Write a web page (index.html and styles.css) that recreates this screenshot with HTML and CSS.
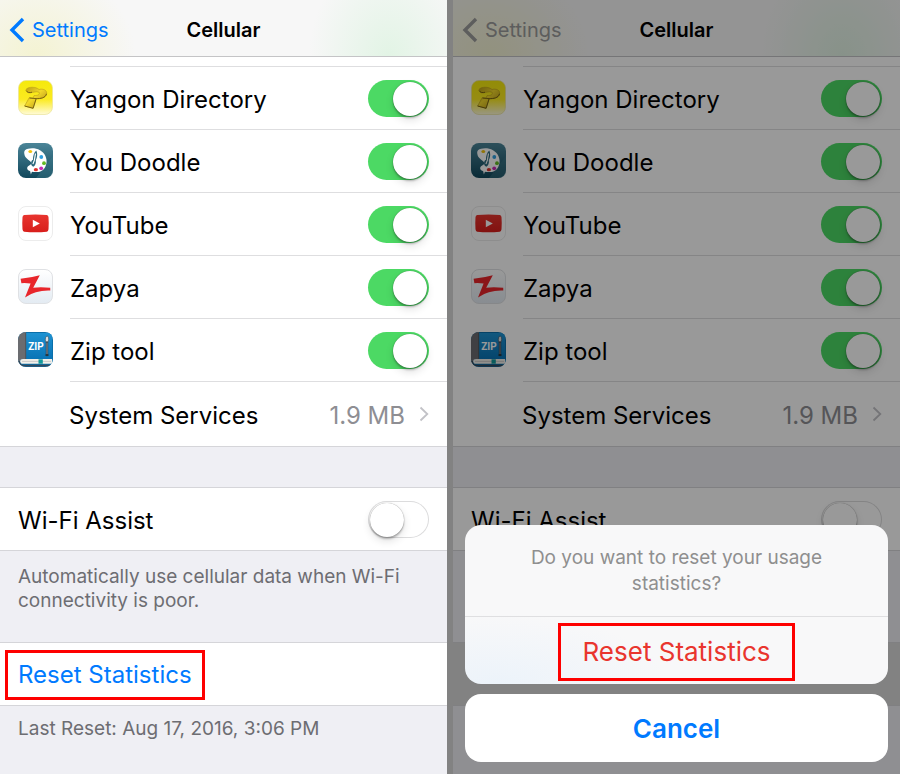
FILE: index.html
```html
<!DOCTYPE html>
<html lang="en">
<head>
<meta charset="utf-8">
<meta name="viewport" content="width=device-width, initial-scale=1">
<title>Cellular</title>
<link rel="stylesheet" href="styles.css">
</head>
<body>
<svg class="defs" width="0" height="0" aria-hidden="true">
  <defs>
    <linearGradient id="g-yellow" x1="0" y1="0" x2="0" y2="1"><stop offset="0" stop-color="#f5e90c"/><stop offset=".55" stop-color="#fbea20"/><stop offset="1" stop-color="#fffbd8"/></linearGradient>
    <linearGradient id="g-gold" x1="0" y1="0" x2="1" y2="1"><stop offset="0" stop-color="#b89a16"/><stop offset=".45" stop-color="#f2d82a"/><stop offset="1" stop-color="#a58312"/></linearGradient>
    <linearGradient id="g-teal" x1="0" y1="0" x2="0" y2="1"><stop offset="0" stop-color="#4b8598"/><stop offset="1" stop-color="#11485c"/></linearGradient>
    <linearGradient id="g-red" x1="0" y1="0" x2="0" y2="1"><stop offset="0" stop-color="#e8352f"/><stop offset="1" stop-color="#d81e1b"/></linearGradient>
    <linearGradient id="g-pale" x1="0" y1="0" x2="0" y2="1"><stop offset="0" stop-color="#ffffff"/><stop offset="1" stop-color="#e3ebf2"/></linearGradient>
    <linearGradient id="g-blue" x1="0" y1="0" x2="0" y2="1"><stop offset="0" stop-color="#1e92d2"/><stop offset="1" stop-color="#0873b5"/></linearGradient>
    <clipPath id="c-tile"><rect width="35" height="35" rx="8"/></clipPath>
  </defs>
  <symbol id="i-yangon" viewBox="0 0 35 35">
    <rect x=".5" y=".5" width="34" height="34" rx="7.5" fill="url(#g-yellow)" stroke="#e9e39a" stroke-width=".7"/>
    <path d="M8 9.5C10 6.5 18 6.5 21 9.5C25 8.4 28.6 10 28.7 13C28.6 17.8 23 18.8 18.2 18.6L15.1 28.3L6.6 26L11.2 17.7L15 18.2L16.2 15.5C20 15.7 22 14.6 21.2 12.3C18.5 10.6 14 13.2 10 12.8Z" fill="url(#g-gold)" stroke="#b89c1a" stroke-width=".6"/>
    <path d="M28.5 13.8C27.5 18 22.5 18.8 18.2 18.6L15.1 28.3L6.6 26M11.5 18L18 18.6M8 10.5C9 12.7 12 13 14 12.2" fill="none" stroke="#6e580e" stroke-width=".9"/>
  </symbol>
  <symbol id="i-doodle" viewBox="0 0 35 35">
    <rect width="35" height="35" rx="8" fill="url(#g-teal)"/>
    <path d="M35 13L18 35H27Q35 35 35 27Z" fill="#3f7788" opacity=".45"/>
    <path d="M7 7.2C10 4.8 17 4.4 22 7.2C27 10 29.4 15.5 28.4 20.5C27.4 26 23.5 29.4 18.5 29C12.5 29.2 8.8 27.5 9.2 24.8C9.6 22.5 13.8 22.5 13.2 19.6C12.8 17.8 7.8 16 6.7 12.5C6 10 6 8.2 7 7.2Z" fill="#fff"/>
    <path d="M18.2 7.6C20 11 19 15 17.8 17.2C18.3 20 17.2 23 15.3 23.7C13.6 23.4 12.6 21 13.2 19C13.5 17.8 14.2 17.2 15 16.8C14.9 13 16 9.5 18.2 7.6Z" fill="#2d697c"/>
    <path d="M17.5 10.5L16.4 17.2L14.9 21" fill="none" stroke="#fff" stroke-width="1.2"/>
    <path d="M12.2 28L12.9 31.5L14.2 28Z" fill="#fff"/>
    <ellipse cx="12.3" cy="8.4" rx="1.9" ry="1.5" fill="#f2c30e"/>
    <circle cx="23.3" cy="14" r="1.9" fill="#2e9fe0"/>
    <circle cx="26" cy="20.2" r="1.9" fill="#63bb24"/>
    <circle cx="23.2" cy="25.3" r="1.9" fill="#c72bb6"/>
    <ellipse cx="17.9" cy="26.7" rx="2.1" ry="1.6" fill="#e0312a"/>
  </symbol>
  <symbol id="i-youtube" viewBox="0 0 35 35">
    <rect x=".5" y=".5" width="34" height="34" rx="7.5" fill="#fff" stroke="#ececec"/>
    <path d="M6.2 9Q17.5 7.8 28.8 9Q30.4 9.3 30.5 11.2Q31 17.5 30.5 23.3Q30.3 25.4 28.8 25.7Q17.5 27 6.2 25.7Q4.7 25.4 4.5 23.3Q4 17.5 4.5 11.2Q4.6 9.3 6.2 9Z" fill="url(#g-red)"/>
    <path d="M14.8 13.8L21.8 17.5L14.8 21.2Z" fill="#fff"/>
  </symbol>
  <symbol id="i-zapya" viewBox="0 0 35 35">
    <rect x=".5" y=".5" width="34" height="34" rx="7.5" fill="url(#g-pale)" stroke="#dfe1e4"/>
    <path d="M2.6 9.8Q12 9 21.8 6.3L15.2 18.7Q23 18 32.2 18.8L32.3 21.6Q18 21 7 28.4L12.6 14.6Q7 13.6 3.4 14.2Z" fill="#e8262b"/>
  </symbol>
  <symbol id="i-zip" viewBox="0 0 35 35">
    <g clip-path="url(#c-tile)">
      <rect width="35" height="35" fill="#0a6faa"/>
      <rect x="7.5" y="1" width="26.5" height="27" fill="url(#g-blue)"/>
      <path d="M0 0H8V27H4Q1.2 28 1.2 35H0Z" fill="#6b6c70"/>
      <path d="M7.7 1V27" stroke="#4e565c" stroke-width="1"/>
      <path d="M5 27H34V31.8H5Q2.2 31.8 2.2 29.4Q2.2 27 5 27Z" fill="#f1efe9"/>
      <path d="M4 29.4H33" stroke="#bbb" stroke-width=".7"/>
      <path d="M1 29Q1 33.6 5.5 33.6H34" fill="none" stroke="#34495b" stroke-width="1.8"/>
      <rect x="20.5" y="27.3" width="4.3" height="4.4" fill="#129a9b"/>
      <path d="M29 10V23" stroke="#33404b" stroke-width="2.4" stroke-linecap="round"/>
      <path d="M29 10.5V22" stroke="#9faab3" stroke-width=".8"/>
      <path d="M27.5 9.7Q26.8 4.2 29.3 4.2Q31.3 4.5 30.3 9.7Z" fill="#dadfe2" stroke="#3a4c59" stroke-width=".6"/>
      <path d="M27.5 22.3H30.5V24H27.5Z" fill="#263640"/>
    </g>
  </symbol>
  <symbol id="i-back" viewBox="0 0 16 26"><path d="M14 2L3 13L14 24" fill="none" stroke="currentColor" stroke-width="3.4"/></symbol>
  <symbol id="i-next" viewBox="0 0 10 16"><path d="M1.5 1.5L8.3 8L1.5 14.5" fill="none" stroke="currentColor" stroke-width="1.8"/></symbol>
</svg>

<main class="screens">
  <section class="phone">
    <header class="bar">
      <a class="back" href="#settings"><svg class="back-icon" aria-hidden="true"><use href="#i-back"/></svg>Settings</a>
      <h1 class="title">Cellular</h1>
    </header>
    <div class="group apps">
      <div class="peek"></div>
      <div class="row"><svg class="app" aria-hidden="true"><use href="#i-yangon"/></svg><div class="cell"><label for="a1">Yangon Directory</label><input class="switch" id="a1" type="checkbox" checked></div></div>
      <div class="row"><svg class="app" aria-hidden="true"><use href="#i-doodle"/></svg><div class="cell"><label for="a2">You Doodle</label><input class="switch" id="a2" type="checkbox" checked></div></div>
      <div class="row"><svg class="app" aria-hidden="true"><use href="#i-youtube"/></svg><div class="cell"><label for="a3">YouTube</label><input class="switch" id="a3" type="checkbox" checked></div></div>
      <div class="row"><svg class="app" aria-hidden="true"><use href="#i-zapya"/></svg><div class="cell"><label for="a4">Zapya</label><input class="switch" id="a4" type="checkbox" checked></div></div>
      <div class="row"><svg class="app" aria-hidden="true"><use href="#i-zip"/><text class="zip-text" x="18" y="18">ZIP</text></svg><div class="cell"><label for="a5">Zip tool</label><input class="switch" id="a5" type="checkbox" checked></div></div>
      <a class="row services" href="#services"><span class="cell"><span class="name">System Services</span><span class="amount">1.9 MB</span><svg class="next-icon" aria-hidden="true"><use href="#i-next"/></svg></span></a>
    </div>
    <div class="group wifi">
      <label for="a6">Wi-Fi Assist</label><input class="switch" id="a6" type="checkbox">
    </div>
    <p class="note">Automatically use cellular data when Wi-Fi connectivity is poor.</p>
    <div class="group reset"><button class="reset-button marked" type="button">Reset Statistics</button></div>
    <p class="note last">Last Reset: Aug 17, 2016, 3:06 PM</p>
  </section>

  <section class="phone dimmed">
    <header class="bar">
      <a class="back" href="#settings"><svg class="back-icon" aria-hidden="true"><use href="#i-back"/></svg>Settings</a>
      <h2 class="title">Cellular</h2>
    </header>
    <div class="group apps">
      <div class="peek"></div>
      <div class="row"><svg class="app" aria-hidden="true"><use href="#i-yangon"/></svg><div class="cell"><label for="b1">Yangon Directory</label><input class="switch" id="b1" type="checkbox" checked></div></div>
      <div class="row"><svg class="app" aria-hidden="true"><use href="#i-doodle"/></svg><div class="cell"><label for="b2">You Doodle</label><input class="switch" id="b2" type="checkbox" checked></div></div>
      <div class="row"><svg class="app" aria-hidden="true"><use href="#i-youtube"/></svg><div class="cell"><label for="b3">YouTube</label><input class="switch" id="b3" type="checkbox" checked></div></div>
      <div class="row"><svg class="app" aria-hidden="true"><use href="#i-zapya"/></svg><div class="cell"><label for="b4">Zapya</label><input class="switch" id="b4" type="checkbox" checked></div></div>
      <div class="row"><svg class="app" aria-hidden="true"><use href="#i-zip"/><text class="zip-text" x="18" y="18">ZIP</text></svg><div class="cell"><label for="b5">Zip tool</label><input class="switch" id="b5" type="checkbox" checked></div></div>
      <a class="row services" href="#services"><span class="cell"><span class="name">System Services</span><span class="amount">1.9 MB</span><svg class="next-icon" aria-hidden="true"><use href="#i-next"/></svg></span></a>
    </div>
    <div class="group wifi">
      <label for="b6">Wi-Fi Assist</label><input class="switch" id="b6" type="checkbox">
    </div>
    <div class="spacer"></div>
    <div class="group reset pressed"></div>
    <div class="shade"></div>
    <div class="sheet" role="dialog" aria-label="Reset statistics">
      <div class="card">
        <p class="question">Do you want to reset your usage statistics?</p>
        <div class="action"><button class="destroy marked" type="button">Reset Statistics</button></div>
      </div>
      <button class="card cancel" type="button">Cancel</button>
    </div>
  </section>
</main>
</body>
</html>
```

FILE: styles.css
```css
* {
  box-sizing: border-box;
}

body {
  margin: 0;
  background: #828282;
  color: #000;
  font-family: Inter, "Liberation Sans", sans-serif;
  font-size: 24px;
  line-height: 30px;
}

.defs {
  position: absolute;
}

h1, h2, p {
  margin: 0;
}

a {
  color: inherit;
  text-decoration: none;
}

button {
  border: 0;
  background: none;
  font: inherit;
  cursor: pointer;
}

.screens {
  display: grid;
  grid-template-columns: 1fr 1fr;
  gap: 6px;
  min-height: 100vh;
}

.phone {
  position: relative;
  background: #efeff4;
}

.bar {
  display: grid;
  grid-template-columns: 1fr auto 1fr;
  align-items: center;
  height: 57px;
  padding: 4px 9px 0;
  border-bottom: 1px solid #c4c4c6;
  background:
    radial-gradient(ellipse 100px 90px at 8% 100%, #f4f3d2, transparent),
    radial-gradient(ellipse 80px 100px at 87% 100%, #e2f4e5, transparent),
    #f7f7f7;
  font-size: 20px;
}

.back {
  display: flex;
  align-items: center;
  gap: 7px;
  color: #007aff;
}

.back-icon {
  width: 16px;
  height: 26px;
}

.title {
  font-size: 20px;
  font-weight: 600;
}

.group {
  border-bottom: 1px solid #d5d5d9;
  background: #fff;
}

.peek {
  height: 10px;
  margin-left: 70px;
  border-bottom: 1px solid #dedee0;
}

.row {
  display: flex;
  align-items: center;
  gap: 17px;
  height: 63px;
  padding-left: 18px;
}

.app {
  flex: none;
  width: 35px;
  height: 35px;
  margin-bottom: 2px;
}

.zip-text {
  fill: #fff;
  font: bold 10px Roboto, sans-serif;
  text-anchor: middle;
}

.cell {
  display: flex;
  flex: 1;
  align-items: center;
  justify-content: space-between;
  height: 63px;
  padding-right: 18px;
  border-bottom: 1px solid #dedee0;
}

.row label,
.wifi label,
.name,
.amount {
  padding-top: 3px;
}

.services {
  height: 64px;
  padding-left: 69px;
}

.services .cell {
  border: 0;
}

.amount {
  margin-left: auto;
  color: #8e8e93;
}

.next-icon {
  width: 10px;
  height: 16px;
  margin-left: 14px;
  color: #c2c2c7;
}

.switch {
  display: grid;
  align-items: center;
  width: 61px;
  height: 37px;
  margin: 0;
  padding: 2px;
  border-radius: 19px;
  background: #fff;
  box-shadow: inset 0 0 0 1px #dcdcdd;
  appearance: none;
}

.switch::before {
  content: "";
  width: 34px;
  height: 34px;
  border-radius: 50%;
  background: #fff;
  box-shadow: 0 2px 2px rgba(0, 0, 0, .25), 0 4px 8px rgba(0, 0, 0, .12), 0 0 1px rgba(0, 0, 0, .45);
}

.switch:checked {
  justify-content: end;
  background: #4cd964;
  box-shadow: none;
}

.wifi {
  display: flex;
  align-items: center;
  justify-content: space-between;
  height: 64px;
  margin-top: 40px;
  padding: 0 18px;
  border-top: 1px solid #d5d5d9;
}

.note {
  padding: 14px 18px 12px;
  color: #6d6d72;
  font-size: 19px;
  line-height: 24px;
}

.last {
  padding-top: 11px;
}

.reset {
  display: flex;
  align-items: center;
  height: 64px;
  margin-top: 17px;
  padding: 2px 0 0 5px;
  border-top: 1px solid #d5d5d9;
}

.reset-button {
  height: 50px;
  padding: 0 10px;
  color: #007aff;
}

.marked {
  border: 3px solid #fe0000;
}

.dimmed .back {
  color: #9b9b9b;
}

.spacer {
  height: 74px;
}

.pressed {
  background: #d9d9d9;
}

.shade {
  position: absolute;
  inset: 0;
  background: rgba(0, 0, 0, .4);
}

.sheet {
  position: absolute;
  right: 12px;
  bottom: 12px;
  left: 12px;
  display: grid;
  gap: 10px;
}

.card {
  border-radius: 16px;
  background: radial-gradient(ellipse 170px 70px at 8% 100%, #ecf3fa, transparent), #f8f8f9;
}

.question {
  padding: 20px 60px 19px;
  border-bottom: 1px solid #dfdfe1;
  color: #8f8f8f;
  font-size: 19px;
  line-height: 26px;
  text-align: center;
}

.action {
  display: flex;
  align-items: center;
  justify-content: center;
  height: 67px;
  padding-top: 3px;
}

.destroy {
  height: 58px;
  padding: 0 21px;
  color: #e9352e;
  font-size: 26px;
}

.cancel {
  height: 68px;
  padding-top: 3px;
  background: #fff;
  color: #007aff;
  font-size: 26px;
  font-weight: 600;
}
```
